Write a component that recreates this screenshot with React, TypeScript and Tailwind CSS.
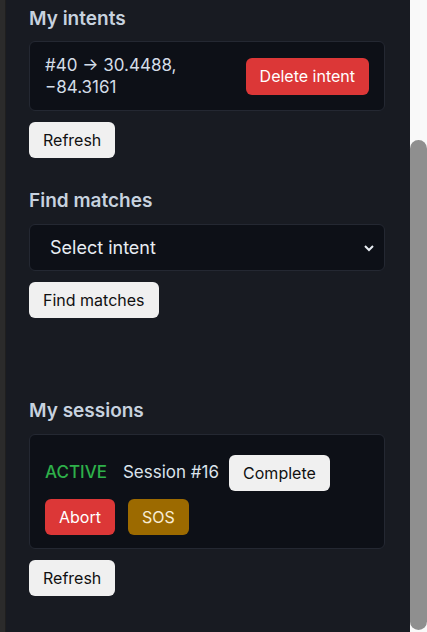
import { useState } from "react";

const font = { fontFamily: "Inter, 'Noto Sans', sans-serif" };

interface Session {
    id: number;
    status: string;
}

function LightButton({ label }: { label: string }) {
    return (
        <button className="h-9 px-[14px] rounded-md bg-[#f0f0f0] text-[#111] text-[16px] leading-none">
            {label}
        </button>
    );
}

export default function App() {
    const [selected, setSelected] = useState("");
    const sessions: Session[] = [{ id: 16, status: "ACTIVE" }];

    return (
        <div className="flex h-[632px] w-[427px] overflow-hidden bg-[#181b22]" style={font}>
            <div className="w-[6px] bg-[#2b2b2b] border-r border-[#1f1f1f]" />

            <div className="flex-1 flex flex-col pl-[23px] pr-[25px] pt-[6px]">
                {/* My intents */}
                <h2 className="text-[19px] font-semibold text-[#c7d2df] leading-[26px]">My intents</h2>
                <div className="mt-[9px] flex items-center justify-between rounded-md border border-[#242832] bg-[#0d1017] pl-[15px] pr-[15px] h-[70px]">
                    <p className="text-[17px] leading-[22px] text-[#d4dde8]">
                        #40 → 30.4488,
                        <br />
                        −84.3161
                    </p>
                    <button className="h-[37px] px-[14px] rounded-md bg-[#dc3737] text-white text-[16px]">
                        Delete intent
                    </button>
                </div>
                <div className="mt-[11px]">
                    <LightButton label="Refresh" />
                </div>

                {/* Find matches */}
                <h2 className="mt-[30px] text-[19px] font-semibold text-[#c7d2df] leading-[26px]">Find matches</h2>
                <div className="mt-[10px] relative">
                    <select
                        value={selected}
                        onChange={(e) => setSelected(e.target.value)}
                        className="appearance-none w-full h-[47px] rounded-md border border-[#242832] bg-[#0d1017] pl-[20px] text-[18px] text-[#e8edf3] outline-none"
                    >
                        <option value="">Select intent</option>
                        <option value="40">#40</option>
                    </select>
                    <svg
                        className="absolute right-[10px] top-[18px] pointer-events-none"
                        width="12"
                        height="12"
                        viewBox="0 0 12 12"
                        fill="none"
                        stroke="#e8edf3"
                        strokeWidth="2"
                    >
                        <path d="M2 4l4 4 4-4" />
                    </svg>
                </div>
                <div className="mt-[11px]">
                    <LightButton label="Find matches" />
                </div>

                {/* My sessions */}
                <h2 className="mt-[80px] text-[19px] font-semibold text-[#c7d2df] leading-[26px]">My sessions</h2>
                {sessions.map((s) => (
                    <div
                        key={s.id}
                        className="mt-[10px] rounded-md border border-[#242832] bg-[#0d1017] px-[15px] pt-[20px] pb-[13px]"
                    >
                        <div className="flex items-center">
                            <span className="text-[17px] font-medium text-[#2eb04a] mr-[16px]">{s.status}</span>
                            <span className="text-[17px] text-[#dbe3ec] mr-[10px]">Session #{s.id}</span>
                            <LightButton label="Complete" />
                        </div>
                        <div className="mt-[8px] flex items-center gap-[13px]">
                            <button className="h-9 px-[14px] rounded-md bg-[#dc3737] text-white text-[16px]">Abort</button>
                            <button className="h-9 px-[14px] rounded-md bg-[#9c6a00] text-[#f8ecd4] text-[16px]">SOS</button>
                        </div>
                    </div>
                ))}
                <div className="mt-[11px]">
                    <LightButton label="Refresh" />
                </div>
            </div>

            {/* scrollbar */}
            <div className="w-[17px] bg-[#f9f9f9] flex justify-center">
                <div className="mt-[140px] mb-[2px] w-[10px] flex-1 rounded-full bg-[#8f8f8f]" />
            </div>
        </div>
    );
}
